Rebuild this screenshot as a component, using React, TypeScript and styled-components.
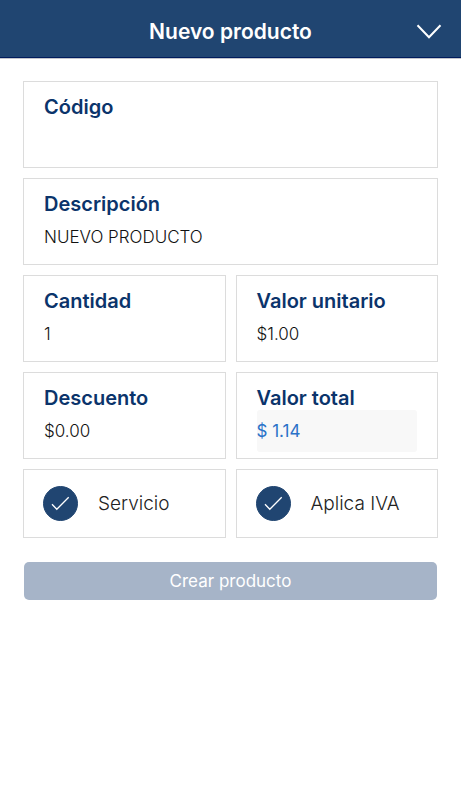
import React, { useId, useState } from "react";
import styled, { createGlobalStyle } from "styled-components";

const GlobalStyle = createGlobalStyle`
  *, *::before, *::after { box-sizing: border-box; }
  body {
    margin: 0;
    background: #ffffff;
    font-family: Inter, "Liberation Sans", sans-serif;
  }
`;

const Header = styled.header`
  display: grid;
  grid-template-columns: 48px 1fr 48px;
  align-items: center;
  height: 59px;
  padding: 5px 8px 0;
  background: #204571;
  border-bottom: 1px solid #c3c5cb;
  box-shadow: inset 0 -1px 0 #001b5c;
`;

const Title = styled.h1`
  grid-column: 2;
  margin: 0;
  color: #ffffff;
  font-size: 21px;
  font-weight: 600;
  line-height: 28px;
  text-align: center;
`;

const CloseButton = styled.button`
  display: flex;
  align-items: center;
  justify-content: center;
  height: 40px;
  padding: 0;
  border: 0;
  background: transparent;
  color: #ffffff;
  cursor: pointer;
`;

const Form = styled.form`
  display: grid;
  grid-template-columns: 1fr 1fr;
  gap: 10px;
  padding: 22px 23px;
`;

const Card = styled.div<{ $wide?: boolean }>`
  display: flex;
  flex-direction: column;
  grid-column: ${({ $wide }) => ($wide ? "1 / -1" : "auto")};
  min-width: 0;
  padding: 13px 20px 6px;
  border: 1px solid #dcdcdc;
`;

const Label = styled.label`
  color: #0b346b;
  font-size: 20px;
  font-weight: 600;
  line-height: 24px;
`;

const Input = styled.input`
  width: 100%;
  height: 42px;
  padding: 0;
  border: 0;
  border-radius: 3px;
  outline: none;
  background: transparent;
  color: #111111;
  font-family: inherit;
  font-size: 17px;
  font-weight: 300;

  &:read-only {
    background: #f8f8f8;
    color: #2a72c8;
    font-weight: 400;
  }
`;

const CheckCard = styled.label`
  display: flex;
  align-items: center;
  gap: 20px;
  height: 69px;
  padding: 0 19px;
  border: 1px solid #dcdcdc;
  color: #222222;
  font-size: 19px;
  font-weight: 300;
  cursor: pointer;
`;

const CheckMark = styled.span`
  display: grid;
  width: 35px;
  height: 35px;

  > * { grid-area: 1 / 1; }
`;

const CheckInput = styled.input`
  width: 35px;
  height: 35px;
  margin: 0;
  appearance: none;
  border: 1px solid #204571;
  border-radius: 50%;
  cursor: pointer;

  &:checked { background: #204571; }
  &:not(:checked) + svg { visibility: hidden; }
`;

const CheckIcon = styled.svg`
  pointer-events: none;
`;

const SubmitButton = styled.button`
  grid-column: 1 / -1;
  height: 38px;
  margin: 14px 1px 0;
  padding: 0;
  border: 0;
  border-radius: 5px;
  background: #a6b4c8;
  color: #ffffff;
  font-family: inherit;
  font-size: 17px;
  font-weight: 400;
`;

interface FieldProps {
  label: string;
  value: string;
  wide?: boolean;
  readOnly?: boolean;
}

function Field({ label, value, wide, readOnly }: FieldProps) {
  const id = useId();
  const [text, setText] = useState(value);
  return (
    <Card $wide={wide}>
      <Label htmlFor={id}>{label}</Label>
      <Input
        id={id}
        type="text"
        value={text}
        readOnly={readOnly}
        onChange={(event) => setText(event.target.value)}
      />
    </Card>
  );
}

function CheckOption({ label }: { label: string }) {
  return (
    <CheckCard>
      <CheckMark>
        <CheckInput type="checkbox" defaultChecked />
        <CheckIcon width="35" height="35" viewBox="0 0 35 35" fill="none" aria-hidden="true">
          <path d="M9 18.3 L13.8 23.3 L25.7 11.3" stroke="#ffffff" strokeWidth="1.3" />
        </CheckIcon>
      </CheckMark>
      <span>{label}</span>
    </CheckCard>
  );
}

export default function App() {
  return (
    <>
      <GlobalStyle />
      <Header>
        <Title>Nuevo producto</Title>
        <CloseButton type="button" aria-label="Cerrar">
          <svg width="26" height="16" viewBox="0 0 26 16" fill="none" aria-hidden="true">
            <path d="M1.5 1.2 L13 13.2 L24.5 1.2" stroke="currentColor" strokeWidth="2" />
          </svg>
        </CloseButton>
      </Header>
      <main>
        <Form onSubmit={(event) => event.preventDefault()}>
          <Field label="Código" value="" wide />
          <Field label="Descripción" value="NUEVO PRODUCTO" wide />
          <Field label="Cantidad" value="1" />
          <Field label="Valor unitario" value="$1.00" />
          <Field label="Descuento" value="$0.00" />
          <Field label="Valor total" value="$ 1.14" readOnly />
          <CheckOption label="Servicio" />
          <CheckOption label="Aplica IVA" />
          <SubmitButton type="submit" disabled>
            Crear producto
          </SubmitButton>
        </Form>
      </main>
    </>
  );
}
